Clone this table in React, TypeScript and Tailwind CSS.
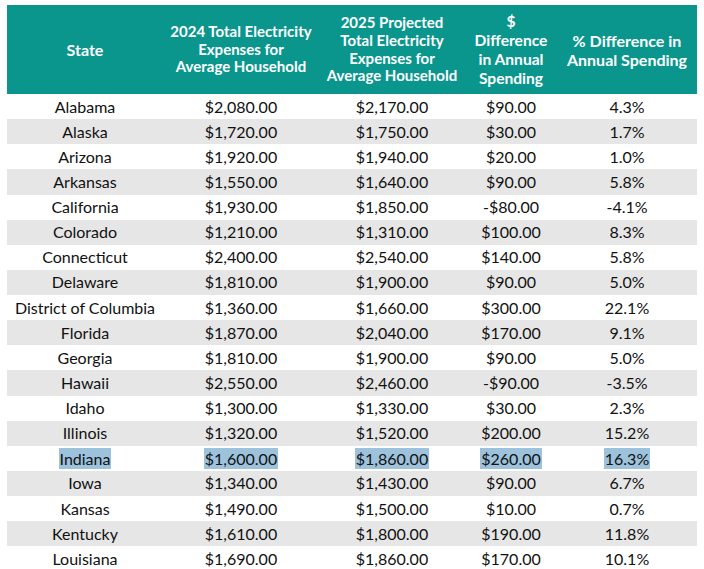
import React from "react";

type Row = {
  state: string;
  y2024: string;
  y2025: string;
  diff: string;
  pct: string;
  selected?: boolean;
};

const rows: Row[] = [
  { state: "Alabama", y2024: "$2,080.00", y2025: "$2,170.00", diff: "$90.00", pct: "4.3%" },
  { state: "Alaska", y2024: "$1,720.00", y2025: "$1,750.00", diff: "$30.00", pct: "1.7%" },
  { state: "Arizona", y2024: "$1,920.00", y2025: "$1,940.00", diff: "$20.00", pct: "1.0%" },
  { state: "Arkansas", y2024: "$1,550.00", y2025: "$1,640.00", diff: "$90.00", pct: "5.8%" },
  { state: "California", y2024: "$1,930.00", y2025: "$1,850.00", diff: "-$80.00", pct: "-4.1%" },
  { state: "Colorado", y2024: "$1,210.00", y2025: "$1,310.00", diff: "$100.00", pct: "8.3%" },
  { state: "Connecticut", y2024: "$2,400.00", y2025: "$2,540.00", diff: "$140.00", pct: "5.8%" },
  { state: "Delaware", y2024: "$1,810.00", y2025: "$1,900.00", diff: "$90.00", pct: "5.0%" },
  { state: "District of Columbia", y2024: "$1,360.00", y2025: "$1,660.00", diff: "$300.00", pct: "22.1%" },
  { state: "Florida", y2024: "$1,870.00", y2025: "$2,040.00", diff: "$170.00", pct: "9.1%" },
  { state: "Georgia", y2024: "$1,810.00", y2025: "$1,900.00", diff: "$90.00", pct: "5.0%" },
  { state: "Hawaii", y2024: "$2,550.00", y2025: "$2,460.00", diff: "-$90.00", pct: "-3.5%" },
  { state: "Idaho", y2024: "$1,300.00", y2025: "$1,330.00", diff: "$30.00", pct: "2.3%" },
  { state: "Illinois", y2024: "$1,320.00", y2025: "$1,520.00", diff: "$200.00", pct: "15.2%" },
  { state: "Indiana", y2024: "$1,600.00", y2025: "$1,860.00", diff: "$260.00", pct: "16.3%", selected: true },
  { state: "Iowa", y2024: "$1,340.00", y2025: "$1,430.00", diff: "$90.00", pct: "6.7%" },
  { state: "Kansas", y2024: "$1,490.00", y2025: "$1,500.00", diff: "$10.00", pct: "0.7%" },
  { state: "Kentucky", y2024: "$1,610.00", y2025: "$1,800.00", diff: "$190.00", pct: "11.8%" },
  { state: "Louisiana", y2024: "$1,690.00", y2025: "$1,860.00", diff: "$170.00", pct: "10.1%" },
];

const cols = "grid grid-cols-[156px_156px_146px_92px_140px]";

function Cell({ text, selected }: { text: string; selected?: boolean }) {
  return (
    <div className="flex items-center justify-center">
      {selected ? (
        <span className="bg-[#9cc2dc] px-[1px] leading-[21px]">{text}</span>
      ) : (
        <span>{text}</span>
      )}
    </div>
  );
}

export default function App() {
  return (
    <div className="min-h-[569px] bg-white pl-[7px] pt-[5px] font-['Lato','Liberation_Sans',sans-serif]">
      <div className="w-[690px]">
        {/* header */}
        <div className={`${cols} h-[89px] bg-[#0a968c] font-bold text-white`}>
          <div className="flex items-center justify-center pt-[1px] text-center text-[16px]">State</div>
          <div className="flex items-center justify-center text-center text-[15px] leading-[17.8px]">
            2024 Total Electricity
            <br />
            Expenses for
            <br />
            Average Household
          </div>
          <div className="flex items-center justify-center text-center text-[15px] leading-[17.8px]">
            2025 Projected
            <br />
            Total Electricity
            <br />
            Expenses for
            <br />
            Average Household
          </div>
          <div className="flex items-center justify-center text-center text-[15.6px] leading-[19px]">
            $<br />
            Difference
            <br />
            in Annual
            <br />
            Spending
          </div>
          <div className="flex items-center justify-center text-center text-[16px] leading-[19px]">
            % Difference in
            <br />
            Annual Spending
          </div>
        </div>

        {/* body */}
        {rows.map((r, i) => (
          <div
            key={r.state}
            className={`${cols} h-[25.14px] text-[16px] leading-[18px] text-[#111] ${
              i % 2 === 1 ? "bg-[#e6e6e6]" : "bg-white"
            }`}
          >
            <Cell text={r.state} selected={r.selected} />
            <Cell text={r.y2024} selected={r.selected} />
            <Cell text={r.y2025} selected={r.selected} />
            <Cell text={r.diff} selected={r.selected} />
            <Cell text={r.pct} selected={r.selected} />
          </div>
        ))}
      </div>
    </div>
  );
}
